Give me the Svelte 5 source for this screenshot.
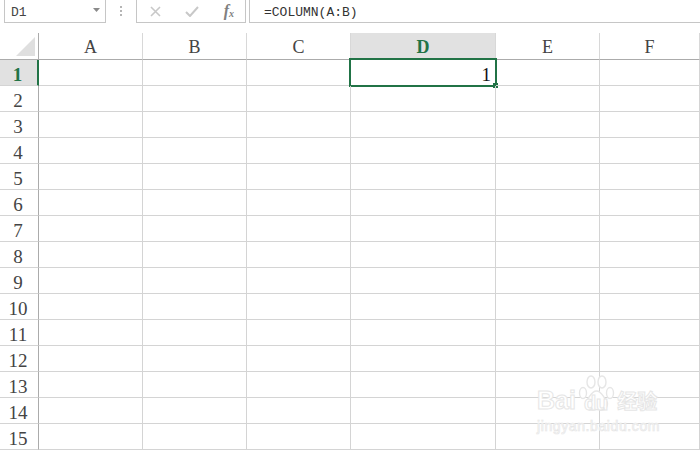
<script>
  const columns = ['A', 'B', 'C', 'D', 'E', 'F']
  const rows = Array.from({ length: 15 }, (_, i) => i + 1)
</script>

<div class="sheet">
  <div class="formula-bar">
    <div class="name-box">
      <span>D1</span>
      <svg class="caret" width="7" height="4" viewBox="0 0 7 4"><path d="M0 0h7L3.5 4z" fill="#8a8a8a" /></svg>
    </div>
    <div class="dots"><i></i><i></i><i></i></div>
    <div class="fx-box">
      <svg width="11" height="11" viewBox="0 0 11 11"><path d="M1 1l9 9M10 1l-9 9" stroke="#c8c8c8" stroke-width="1.6" fill="none" /></svg>
      <svg width="14" height="11" viewBox="0 0 14 11"><path d="M1 6l4 4 8-9" stroke="#c8c8c8" stroke-width="2" fill="none" /></svg>
      <span class="fx">f<sub>x</sub></span>
    </div>
    <div class="formula">=COLUMN(A:B)</div>
  </div>

  <div class="grid">
    <div class="corner"><div class="triangle"></div></div>
    {#each columns as col}
      <div class="col-head" class:active={col === 'D'}>{col}</div>
    {/each}
    {#each rows as row}
      <div class="row-head" class:active={row === 1}>{row}</div>
      {#each columns as col}
        <div class="cell">
          {#if row === 1 && col === 'D'}
            <span class="value">1</span>
            <div class="selection"><div class="handle"></div></div>
          {/if}
        </div>
      {/each}
    {/each}
  </div>

  <div class="watermark">
    <svg class="paw" width="37" height="38" viewBox="0 0 37 38">
      <g fill="#fff" stroke="#e6e6e6" stroke-width="1.4">
        <ellipse cx="5" cy="18" rx="3.5" ry="5.5" />
        <ellipse cx="13" cy="7" rx="4" ry="6" />
        <ellipse cx="24" cy="7" rx="4" ry="6" />
        <ellipse cx="32" cy="18" rx="3.5" ry="5.5" />
        <path d="M18.5 16c5 0 6 5 9.500 9 3.500 4.500 0 11-5.500 10-3-.5-5-1-8 0-5.500 1-9-5.500-5.500-10 3.500-4 4.500-9 9.500-9z" />
      </g>
    </svg>
    <div class="brand">
      <span>Bai</span><span class="du">du</span><span class="cn">经验</span>
    </div>
    <div class="url">jingyan.baidu.com</div>
  </div>
</div>

<style>
  :global(body) {
    margin: 0;
    background: #fff;
  }

  .sheet {
    position: relative;
    width: 700px;
    height: 450px;
    overflow: hidden;
    background: #fff;
  }

  .formula-bar {
    display: flex;
    height: 23px;
    margin-bottom: 10px;
    padding-left: 4px;
    box-sizing: border-box;
    font-family: "Liberation Mono", monospace;
    font-size: 13px;
    color: #444;
  }

  .name-box,
  .fx-box,
  .formula {
    box-sizing: border-box;
    border: 1px solid #c6c6c6;
    border-top: none;
    display: flex;
    align-items: center;
  }

  .name-box {
    width: 102px;
    padding: 2px 5px 0 6px;
    justify-content: space-between;
  }

  .caret {
    margin-bottom: 4px;
  }

  .dots {
    width: 30px;
    display: flex;
    flex-direction: column;
    align-items: center;
    justify-content: center;
    gap: 2px;
    padding-bottom: 1px;
  }

  .dots i {
    width: 2px;
    height: 2px;
    background: #b5b5b5;
  }

  .fx-box {
    width: 110px;
    padding: 0 11px 0 13px;
    justify-content: space-between;
  }

  .fx {
    font-family: "Liberation Serif", serif;
    font-style: italic;
    font-weight: bold;
    font-size: 16px;
    color: #808080;
  }

  .fx sub {
    font-size: 10px;
    vertical-align: -1px;
  }

  .formula {
    flex: 1;
    margin-left: 3px;
    padding: 2px 0 0 14px;
    border-right: none;
    color: #333;
  }

  .grid {
    display: grid;
    grid-template-columns: 39px 104px 104px 104px 145px 104px 100px;
    grid-template-rows: 27px repeat(15, 26px);
    font-family: "Liberation Serif", serif;
    font-size: 19px;
    color: #444;
  }

  .corner,
  .col-head {
    box-sizing: border-box;
    border-bottom: 1px solid #ababab;
    border-right: 1px solid #d8d8d8;
  }

  .corner {
    padding: 4px 0 0 16px;
    border-right-color: #ababab;
  }

  .triangle {
    width: 19px;
    height: 19px;
    background: #dfdfdf;
    clip-path: polygon(100% 0, 100% 100%, 0 100%);
  }

  .col-head {
    display: flex;
    align-items: center;
    justify-content: center;
    padding-top: 3px;
    font-size: 18px;
  }

  .col-head.active {
    background: #e1e1e1;
    color: #217346;
    font-weight: bold;
  }

  .row-head {
    box-sizing: border-box;
    border-bottom: 1px solid #d4d4d4;
    border-right: 1px solid #ababab;
    display: flex;
    align-items: center;
    justify-content: center;
    padding: 4px 2px 0 0;
  }

  .row-head.active {
    background: #e1e1e1;
    color: #217346;
    border-right: 2px solid #217346;
    font-weight: bold;
  }

  .cell {
    position: relative;
    box-sizing: border-box;
    border-bottom: 1px solid #d4d4d4;
    border-right: 1px solid #d4d4d4;
    display: flex;
    align-items: center;
    justify-content: flex-end;
  }

  .value {
    padding: 4px 4px 0 0;
    color: #111;
  }

  .selection {
    position: absolute;
    left: -2px;
    top: -2px;
    width: 148px;
    height: 29px;
    box-sizing: border-box;
    border: 2px solid #217346;
  }

  .handle {
    position: absolute;
    right: -3px;
    bottom: -3px;
    width: 5px;
    height: 5px;
    background: #217346;
  }

  .watermark {
    position: absolute;
    left: 537px;
    top: 375px;
    width: 125px;
  }

  .paw {
    position: absolute;
    left: 41px;
    top: 0;
  }

  .brand {
    position: absolute;
    left: 0;
    top: 11px;
    white-space: nowrap;
    font-family: "Liberation Sans", sans-serif;
    font-size: 25px;
    font-weight: bold;
    color: #fff;
    -webkit-text-stroke: 1px #e6e6e6;
  }

  .du {
    position: relative;
    top: 1px;
    margin-left: 8px;
    font-size: 20px;
  }

  .cn {
    margin-left: 9px;
    font-family: "Noto Sans CJK SC", sans-serif;
    font-size: 20px;
  }

  .url {
    position: absolute;
    left: 0;
    top: 43px;
    white-space: nowrap;
    font-family: "Liberation Sans", sans-serif;
    font-size: 14px;
    letter-spacing: 0.6px;
    color: #fff;
    -webkit-text-stroke: 0.7px #e6e6e6;
  }
</style>
